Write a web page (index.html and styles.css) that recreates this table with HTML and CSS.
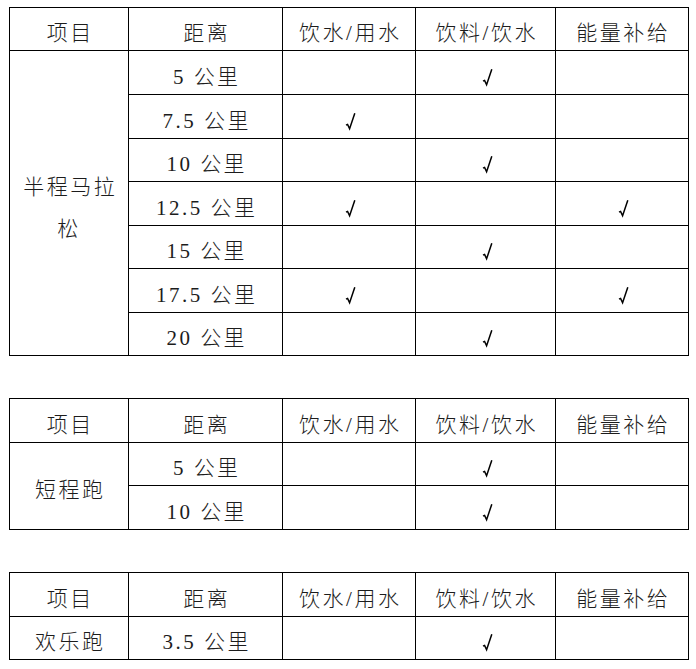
FILE: index.html
```html
<!DOCTYPE html>
<html lang="zh">
<head>
<meta charset="utf-8">
<link rel="stylesheet" href="styles.css">
</head>
<body>
<div class="page">
  <div class="tbl t1">
    <div class="c">项目</div><div class="c">距离</div><div class="c">饮水/用水</div><div class="c">饮料/饮水</div><div class="c">能量补给</div>
    <div class="c span7 wrap">半程马拉<br>松</div>
    <div class="c">5 公里</div><div class="c"></div><div class="c"><svg class="ck" viewBox="0 0 11 19"><path d="M1 13.2 L2.6 12.4 L4.6 16.8 L9.8 1.2"/></svg></div><div class="c"></div>
    <div class="c">7.5 公里</div><div class="c"><svg class="ck" viewBox="0 0 11 19"><path d="M1 13.2 L2.6 12.4 L4.6 16.8 L9.8 1.2"/></svg></div><div class="c"></div><div class="c"></div>
    <div class="c">10 公里</div><div class="c"></div><div class="c"><svg class="ck" viewBox="0 0 11 19"><path d="M1 13.2 L2.6 12.4 L4.6 16.8 L9.8 1.2"/></svg></div><div class="c"></div>
    <div class="c">12.5 公里</div><div class="c"><svg class="ck" viewBox="0 0 11 19"><path d="M1 13.2 L2.6 12.4 L4.6 16.8 L9.8 1.2"/></svg></div><div class="c"></div><div class="c"><svg class="ck" viewBox="0 0 11 19"><path d="M1 13.2 L2.6 12.4 L4.6 16.8 L9.8 1.2"/></svg></div>
    <div class="c">15 公里</div><div class="c"></div><div class="c"><svg class="ck" viewBox="0 0 11 19"><path d="M1 13.2 L2.6 12.4 L4.6 16.8 L9.8 1.2"/></svg></div><div class="c"></div>
    <div class="c">17.5 公里</div><div class="c"><svg class="ck" viewBox="0 0 11 19"><path d="M1 13.2 L2.6 12.4 L4.6 16.8 L9.8 1.2"/></svg></div><div class="c"></div><div class="c"><svg class="ck" viewBox="0 0 11 19"><path d="M1 13.2 L2.6 12.4 L4.6 16.8 L9.8 1.2"/></svg></div>
    <div class="c">20 公里</div><div class="c"></div><div class="c"><svg class="ck" viewBox="0 0 11 19"><path d="M1 13.2 L2.6 12.4 L4.6 16.8 L9.8 1.2"/></svg></div><div class="c"></div>
  </div>

  <div class="tbl t2">
    <div class="c">项目</div><div class="c">距离</div><div class="c">饮水/用水</div><div class="c">饮料/饮水</div><div class="c">能量补给</div>
    <div class="c span2">短程跑</div>
    <div class="c">5 公里</div><div class="c"></div><div class="c"><svg class="ck" viewBox="0 0 11 19"><path d="M1 13.2 L2.6 12.4 L4.6 16.8 L9.8 1.2"/></svg></div><div class="c"></div>
    <div class="c">10 公里</div><div class="c"></div><div class="c"><svg class="ck" viewBox="0 0 11 19"><path d="M1 13.2 L2.6 12.4 L4.6 16.8 L9.8 1.2"/></svg></div><div class="c"></div>
  </div>

  <div class="tbl t3">
    <div class="c">项目</div><div class="c">距离</div><div class="c">饮水/用水</div><div class="c">饮料/饮水</div><div class="c">能量补给</div>
    <div class="c">欢乐跑</div>
    <div class="c">3.5 公里</div><div class="c"></div><div class="c"><svg class="ck" viewBox="0 0 11 19"><path d="M1 13.2 L2.6 12.4 L4.6 16.8 L9.8 1.2"/></svg></div><div class="c"></div>
  </div>
</div>
</body>
</html>
```

FILE: styles.css
```css
html, body {
  margin: 0;
  padding: 0;
  background: #fff;
}

.page {
  padding: 7px 0 0 9px;
  display: flex;
  flex-direction: column;
  align-items: flex-start;
  gap: 42px;
  font-family: "Liberation Serif", "Noto Sans CJK SC", serif;
  font-size: 21px;
  font-weight: 300;
  color: #1c1c1c;
}

.tbl {
  display: grid;
  grid-template-columns: 118px 153px 132px 139px 132px;
  gap: 1px;
  background: #000;
  border: 1px solid #000;
}

.t1 {
  grid-template-rows: 42px 43px 43px 42px 43px 42px 43px 42px;
}

.t2 {
  grid-template-rows: 43px 42px 43px;
}

.t3 {
  grid-template-rows: 43px 42px;
}

.c {
  background: #fff;
  display: flex;
  align-items: center;
  justify-content: center;
  text-align: center;
  line-height: 1;
  padding-top: 9px;
  box-sizing: border-box;
  letter-spacing: 2.5px;
  text-indent: 2.5px;
  white-space: nowrap;
}

.span7 {
  grid-row: span 7;
}

.span2 {
  grid-row: span 2;
}

.wrap {
  line-height: 42px;
  padding-top: 10px;
}

.ck {
  width: 11px;
  height: 19px;
  margin-left: 3px;
  fill: none;
  stroke: #000;
  stroke-width: 1.5;
  stroke-linejoin: miter;
  stroke-linecap: butt;
}
```
